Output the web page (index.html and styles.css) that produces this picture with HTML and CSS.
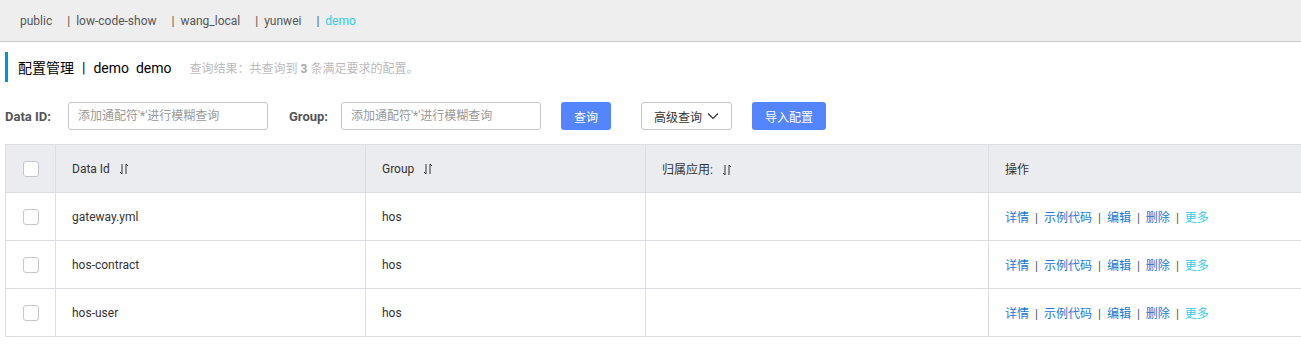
FILE: index.html
```html
<!DOCTYPE html>
<html>
<head>
  <title>配置管理</title>
  <link rel="stylesheet" href="styles.css">
</head>
<body>
  <!-- 命名空间切换 -->
  <div class="ns-bar">
    <span class="ns-item">public</span>
    <span class="ns-item"><span class="ns-sep">|</span>low-code-show</span>
    <span class="ns-item"><span class="ns-sep">|</span>wang_local</span>
    <span class="ns-item"><span class="ns-sep">|</span>yunwei</span>
    <span class="ns-item active"><span class="ns-sep">|</span>demo</span>
  </div>

  <div class="page">
    <div class="title-bar">
      <span class="title">配置管理<span class="title-sep">|</span>demo&nbsp; demo</span>
      <span class="hint">查询结果：共查询到 <b>3</b> 条满足要求的配置。</span>
    </div>

    <div class="filters">
      <label class="flabel">Data ID:</label>
      <input class="finput" type="text" placeholder="添加通配符'*'进行模糊查询">
      <label class="flabel group-label">Group:</label>
      <input class="finput" type="text" placeholder="添加通配符'*'进行模糊查询">
      <button class="btn btn-primary btn-query">查询</button>
      <button class="btn btn-normal">高级查询
        <svg class="caret" width="12" height="8" viewBox="0 0 12 8"><path d="M1 1.5 L6 6.5 L11 1.5" fill="none" stroke="#333" stroke-width="1.2"/></svg>
      </button>
      <button class="btn btn-primary btn-import">导入配置</button>
    </div>

    <div class="table-wrap">
      <table class="cfg-table">
        <colgroup>
          <col style="width:50px">
          <col style="width:310px">
          <col style="width:280px">
          <col style="width:343px">
          <col>
        </colgroup>
        <thead>
          <tr>
            <th class="check-cell"><span class="checkbox"></span></th>
            <th>Data Id <svg class="sort" width="10" height="12" viewBox="0 0 10 12"><path d="M3 1 V11 L1 9 M7 11 V1 L9 3" fill="none" stroke="#333" stroke-width="1"/></svg></th>
            <th>Group <svg class="sort" width="10" height="12" viewBox="0 0 10 12"><path d="M3 1 V11 L1 9 M7 11 V1 L9 3" fill="none" stroke="#333" stroke-width="1"/></svg></th>
            <th>归属应用: <svg class="sort" width="10" height="12" viewBox="0 0 10 12"><path d="M3 1 V11 L1 9 M7 11 V1 L9 3" fill="none" stroke="#333" stroke-width="1"/></svg></th>
            <th>操作</th>
          </tr>
        </thead>
        <tbody>
          <tr>
            <td class="check-cell"><span class="checkbox"></span></td>
            <td>gateway.yml</td>
            <td>hos</td>
            <td></td>
            <td class="ops"><a>详情</a><span class="sep">|</span><a>示例代码</a><span class="sep">|</span><a>编辑</a><span class="sep">|</span><a>删除</a><span class="sep">|</span><a class="more">更多</a></td>
          </tr>
          <tr>
            <td class="check-cell"><span class="checkbox"></span></td>
            <td>hos-contract</td>
            <td>hos</td>
            <td></td>
            <td class="ops"><a>详情</a><span class="sep">|</span><a>示例代码</a><span class="sep">|</span><a>编辑</a><span class="sep">|</span><a>删除</a><span class="sep">|</span><a class="more">更多</a></td>
          </tr>
          <tr>
            <td class="check-cell"><span class="checkbox"></span></td>
            <td>hos-user</td>
            <td>hos</td>
            <td></td>
            <td class="ops"><a>详情</a><span class="sep">|</span><a>示例代码</a><span class="sep">|</span><a>编辑</a><span class="sep">|</span><a>删除</a><span class="sep">|</span><a class="more">更多</a></td>
          </tr>
        </tbody>
      </table>
    </div>
  </div>
</body>
</html>
```

FILE: styles.css
```css
body {
  margin: 0;
  font-family: Roboto, "Noto Sans CJK SC", sans-serif;
  font-size: 12px;
  color: #333;
  overflow: hidden;
}

.ns-bar {
  height: 41px;
  background: #eee;
  border-bottom: 1px solid #ccc;
  display: flex;
  align-items: center;
  padding-left: 20px;
  color: #555;
}

.ns-item {
  margin-right: 15px;
}

.ns-sep {
  margin-right: 6px;
}

.ns-item.active {
  color: #33cde5;
}

.ns-item.active .ns-sep {
  color: #555;
}

.page {
  padding: 10px 0 0 5px;
}

.title-bar {
  height: 30px;
  border-left: 3px solid #0095d3;
  display: flex;
  align-items: center;
  padding-left: 10px;
}

.title {
  font-size: 14px;
  color: #000;
}

.title-sep {
  margin: 0 8px;
}

.hint {
  margin-left: 18px;
  font-size: 12px;
  color: #bbb;
}

.hint b {
  color: #aaa;
}

.filters {
  display: flex;
  align-items: center;
  margin-top: 20px;
  height: 28px;
}

.flabel {
  font-weight: bold;
  font-size: 13px;
  color: #555;
  width: 63px;
}

.group-label {
  margin-left: 21px;
  width: 52px;
}

.finput {
  width: 200px;
  height: 28px;
  box-sizing: border-box;
  border: 1px solid #c4c6cf;
  border-radius: 3px;
  padding: 0 9px;
  font-family: inherit;
  font-size: 12px;
}

.finput::placeholder {
  color: #999;
}

.btn {
  height: 28px;
  box-sizing: border-box;
  border-radius: 3px;
  font-family: inherit;
  font-size: 12px;
  padding: 0;
  display: inline-flex;
  align-items: center;
  justify-content: center;
  white-space: nowrap;
}

.btn-primary {
  background: #5584ff;
  border: none;
  color: #fff;
}

.btn-query {
  margin-left: 20px;
  width: 50px;
}

.btn-normal {
  margin: 0 20px 0 30px;
  width: 91px;
  background: #fff;
  border: 1px solid #c4c6cf;
  color: #333;
}

.btn-import {
  width: 74px;
}

.caret {
  margin-left: 5px;
}

.table-wrap {
  margin-top: 14px;
}

.cfg-table {
  width: 1300px;
  border-collapse: collapse;
  table-layout: fixed;
}

.cfg-table th,
.cfg-table td {
  border: 1px solid #dcdee3;
  height: 48px;
  padding: 0 16px;
  text-align: left;
  font-weight: normal;
  box-sizing: border-box;
}

.cfg-table th {
  background: #ebecf0;
}

.cfg-table td {
  background: #fff;
}

.cfg-table .check-cell {
  padding: 0;
  text-align: center;
}

.checkbox {
  display: inline-block;
  width: 14px;
  height: 14px;
  border: 1px solid #c4c6cf;
  border-radius: 3px;
  background: #fff;
  vertical-align: middle;
}

.sort {
  margin-left: 6px;
  vertical-align: -2px;
}

.ops a {
  color: #2077d6;
}

.ops a.more {
  color: #33cde5;
}

.ops .sep {
  margin: 0 6px;
  color: #555;
}
```
